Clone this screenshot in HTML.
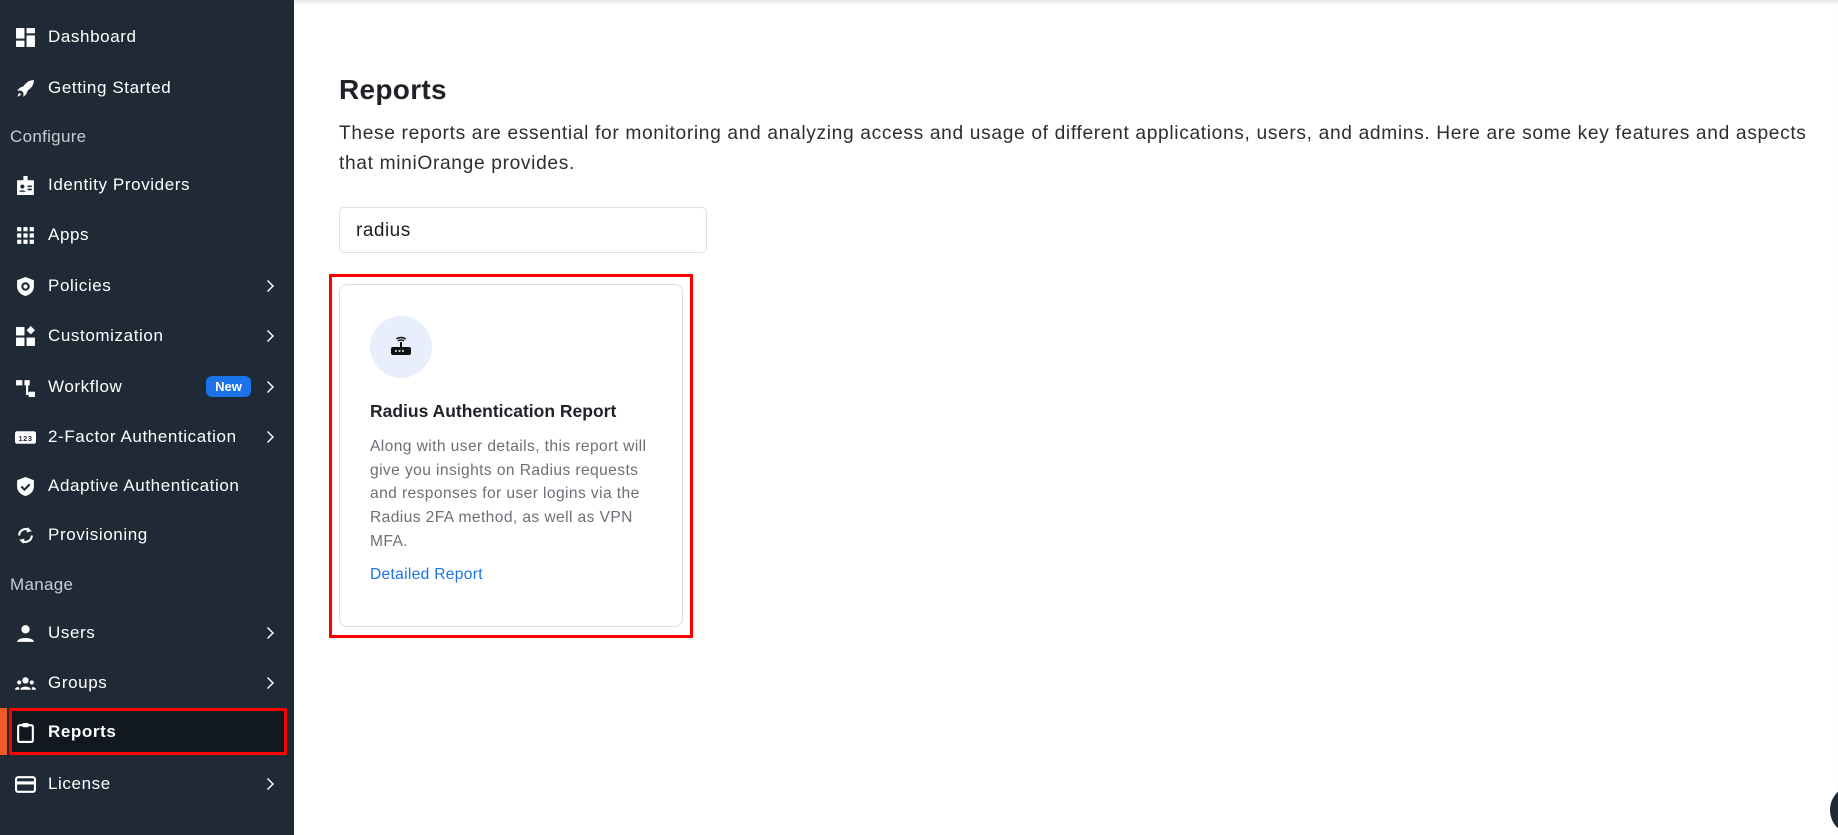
<!DOCTYPE html>
<html><head><meta charset="utf-8"><style>
*{margin:0;padding:0;box-sizing:border-box}
body{width:1838px;height:835px;overflow:hidden;background:#fff;font-family:"Liberation Sans",sans-serif;position:relative}
.sb{position:absolute;left:0;top:0;width:294px;height:835px;background:#1f2a36}
.it{position:absolute;left:0;width:294px;height:40px;display:flex;align-items:center;color:#fff;font-size:17px;letter-spacing:.6px}
.it svg{position:absolute;left:15px;width:21px;height:21px;fill:#fff}
.it .t{position:absolute;left:48px}
.it .ch{position:absolute;left:262px;width:12px;height:12px;border-right:2.5px solid #fff;border-top:2.5px solid #fff;transform:rotate(45deg) scale(.7)}
.sec{position:absolute;left:10px;color:#c7ccd2;font-size:17px;letter-spacing:.3px}
.main{position:absolute;left:294px;top:0;right:0;height:835px;box-shadow:inset 0 6px 6px -4px rgba(0,0,0,.12)}
</style></head><body>
<div class="sb">
<div class="it" style="top:17px"><svg viewBox="0 0 20 20"><rect x="1" y="1" width="8" height="10"/><rect x="11" y="1" width="8" height="5"/><rect x="11" y="8" width="8" height="11"/><rect x="1" y="13" width="8" height="6"/></svg><span class="t">Dashboard</span></div>
<div class="it" style="top:68px"><svg viewBox="0 0 20 20"><path d="M18 2c-5 0-8 3-10 6l-3 1-3 3 4 0 2 2 0 4 3-3 1-3c3-2 6-5 6-10zM4 14l-2 4 4-2z"/></svg><span class="t">Getting Started</span></div>
<div class="sec" style="top:127px">Configure</div>
<div class="it" style="top:165px"><svg viewBox="0 0 20 20"><path d="M8 1h4v4h6v14H2V5h6z"/><circle cx="7" cy="11" r="2" fill="#1f2a36"/><path d="M4 16c0-2 6-2 6 0z M12 10h4v1.5h-4zM12 13h4v1.5h-4z" fill="#1f2a36"/></svg><span class="t">Identity Providers</span></div>
<div class="it" style="top:215px"><svg viewBox="0 0 20 20"><g><rect x="2" y="2" width="4" height="4"/><rect x="8" y="2" width="4" height="4"/><rect x="14" y="2" width="4" height="4"/><rect x="2" y="8" width="4" height="4"/><rect x="8" y="8" width="4" height="4"/><rect x="14" y="8" width="4" height="4"/><rect x="2" y="14" width="4" height="4"/><rect x="8" y="14" width="4" height="4"/><rect x="14" y="14" width="4" height="4"/></g></svg><span class="t">Apps</span></div>
<div class="it" style="top:266px"><svg viewBox="0 0 20 20"><path d="M10 1l8 3v6c0 5-4 8-8 9-4-1-8-4-8-9V4z"/><circle cx="10" cy="10" r="3" fill="none" stroke="#1f2a36" stroke-width="2"/></svg><span class="t">Policies</span><span class="ch"></span></div>
<div class="it" style="top:316px"><svg viewBox="0 0 20 20"><rect x="1" y="1" width="8" height="8"/><rect x="1" y="11" width="8" height="8"/><rect x="11" y="11" width="8" height="8"/><path d="M15 0l4 4-4 4-4-4z"/></svg><span class="t">Customization</span><span class="ch"></span></div>
<div class="it" style="top:367px"><svg viewBox="0 0 20 20"><rect x="1" y="3" width="6" height="5"/><rect x="9" y="3" width="5" height="5"/><rect x="13" y="14" width="6" height="5"/><rect x="10.5" y="6" width="2" height="11"/><rect x="11" y="15" width="3" height="2"/></svg><span class="t">Workflow</span><span style="position:absolute;left:206px;top:9px;width:45px;height:21px;background:#1a73e8;border-radius:6px;color:#fff;font-size:13px;font-weight:bold;text-align:center;line-height:21px;letter-spacing:0">New</span><span class="ch"></span></div>
<div class="it" style="top:417px"><svg viewBox="0 0 20 20"><rect x="0" y="4" width="20" height="12" rx="2"/><text x="10" y="13.5" font-size="7" font-family="Liberation Sans" text-anchor="middle" fill="#1f2a36" font-weight="bold">123</text></svg><span class="t">2-Factor Authentication</span><span class="ch"></span></div>
<div class="it" style="top:466px"><svg viewBox="0 0 20 20"><path d="M10 1l8 3v6c0 5-4 8-8 9-4-1-8-4-8-9V4z"/><path d="M6 10l3 3 5-5" stroke="#1f2a36" stroke-width="2" fill="none"/></svg><span class="t">Adaptive Authentication</span></div>
<div class="it" style="top:515px"><svg viewBox="0 0 20 20"><path d="M4 10a6 6 0 0 1 10-4.5M16 10a6 6 0 0 1-10 4.5" stroke="#fff" stroke-width="2" fill="none"/><path d="M12 2l4 4-5 1zM8 18l-4-4 5-1z"/></svg><span class="t">Provisioning</span></div>
<div class="sec" style="top:575px">Manage</div>
<div class="it" style="top:613px"><svg viewBox="0 0 20 20"><circle cx="10" cy="6" r="4"/><path d="M2 18c0-5 16-5 16 0z"/></svg><span class="t">Users</span><span class="ch"></span></div>
<div class="it" style="top:663px"><svg viewBox="0 0 20 20"><circle cx="10" cy="7" r="3"/><circle cx="4" cy="9" r="2"/><circle cx="16" cy="9" r="2"/><path d="M5 16c0-4 10-4 10 0zM0 16c0-3 4-3 4-2v2zM20 16c0-3-4-3-4-2v2z"/></svg><span class="t">Groups</span><span class="ch"></span></div>
<div style="position:absolute;left:0;top:708px;width:7px;height:47px;background:#f05a28"></div>
<div style="position:absolute;left:9px;top:708px;width:278px;height:47px;background:#121820;border:3px solid #f00;border-radius:2px"></div>
<div class="it" style="top:712px"><svg viewBox="0 0 20 20"><rect x="3" y="3" width="14" height="16" rx="1.5" fill="none" stroke="#fff" stroke-width="2"/><rect x="7" y="1" width="6" height="4" rx="1"/></svg><span class="t" style="font-weight:bold">Reports</span></div>
<div class="it" style="top:764px"><svg viewBox="0 0 20 20"><rect x="1" y="3" width="18" height="14" rx="2" fill="none" stroke="#fff" stroke-width="2"/><rect x="1" y="7" width="18" height="3"/></svg><span class="t">License</span><span class="ch"></span></div>
</div>
<div class="main"></div>
<div style="position:absolute;left:339px;top:74px;font-size:28px;font-weight:bold;color:#1f2328;letter-spacing:.3px">Reports</div>
<div style="position:absolute;left:339px;top:119px;width:1495px;font-size:19.2px;line-height:30px;color:#2b2f33;letter-spacing:.65px;white-space:nowrap">These reports are essential for monitoring and analyzing access and usage of different applications, users, and admins. Here are some key features and aspects<br>that miniOrange provides.</div>
<div style="position:absolute;left:339px;top:207px;width:368px;height:46px;border:1px solid #dcdfe3;border-radius:5px;font-size:19px;color:#222;padding:12px 0 0 16px;letter-spacing:.5px">radius</div>
<div style="position:absolute;left:329px;top:274px;width:364px;height:364px;border:3.5px solid #f00"></div>
<div style="position:absolute;left:339px;top:284px;width:344px;height:343px;border:1px solid #d9dce0;border-radius:8px;background:#fff"></div>
<div style="position:absolute;left:370px;top:316px;width:62px;height:62px;border-radius:50%;background:#e8eefb"></div>
<svg style="position:absolute;left:389px;top:333px" width="24" height="24" viewBox="0 0 24 24"><path d="M9 8a5 5 0 0 1 6 0M7.5 6a7.5 7.5 0 0 1 9 0" stroke="#111" stroke-width="1.5" fill="none"/><rect x="11" y="9" width="2" height="6" fill="#111"/><rect x="2" y="14" width="20" height="8" rx="2" fill="#111"/><circle cx="7" cy="18" r="1" fill="#e8eefb"/><circle cx="10.5" cy="18" r="1" fill="#e8eefb"/><circle cx="14" cy="18" r="1" fill="#e8eefb"/></svg>
<div style="position:absolute;left:370px;top:401px;font-size:17.5px;font-weight:bold;color:#1f2328">Radius Authentication Report</div>
<div style="position:absolute;left:370px;top:435px;font-size:15.6px;line-height:23.7px;color:#6b7076;letter-spacing:.4px;white-space:nowrap">Along with user details, this report will<br>give you insights on Radius requests<br>and responses for user logins via the<br>Radius 2FA method, as well as VPN<br>MFA.</div>
<div style="position:absolute;left:370px;top:566px;font-size:15.6px;color:#1a73e8;letter-spacing:.3px">Detailed Report</div>
<div style="position:absolute;left:1830px;top:785px;width:50px;height:50px;border-radius:50%;background:#1f2a36"></div>
</body></html>
